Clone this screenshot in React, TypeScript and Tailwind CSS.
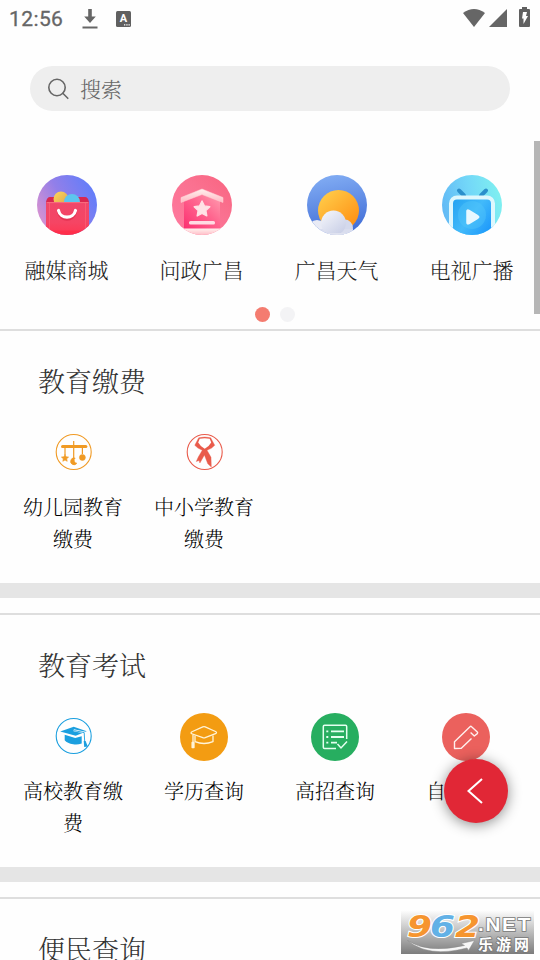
import React from 'react';

type Item = {
  label: string;
  icon: React.FC;
};

const ShopIcon: React.FC = () => (
  <svg viewBox="0 0 60 60" className="w-[60px] h-[60px]">
    <defs>
      <linearGradient id="shopBg" x1="0" y1="0.7" x2="1" y2="0.2">
        <stop offset="0" stopColor="#d992d0" />
        <stop offset="0.45" stopColor="#927fe9" />
        <stop offset="1" stopColor="#5d7dfb" />
      </linearGradient>
      <linearGradient id="shopBag" x1="0" y1="0" x2="0" y2="1">
        <stop offset="0" stopColor="#f0476a" />
        <stop offset="0.6" stopColor="#f54564" />
        <stop offset="1" stopColor="#ff3550" />
      </linearGradient>
      <linearGradient id="shopYellow" x1="0" y1="0" x2="1" y2="1">
        <stop offset="0" stopColor="#ffd95c" />
        <stop offset="1" stopColor="#d9a04a" />
      </linearGradient>
      <clipPath id="shopClip"><circle cx="30" cy="30" r="30" /></clipPath>
    </defs>
    <g clipPath="url(#shopClip)">
      <rect width="60" height="60" fill="url(#shopBg)" />
      <path d="M13 22h35q3 0 4 5v3H9v-3q1-5 4-5z" fill="#d92750" />
      <circle cx="24" cy="24" r="7.500" fill="url(#shopYellow)" />
      <circle cx="35" cy="27" r="8" fill="#5cc5ee" />
      <rect x="9" y="27" width="43" height="34" rx="2" fill="url(#shopBag)" />
      <path d="M10 55.500h41v5H10z" fill="#ff2440" opacity="0.500" />
      <path d="M9.500 27.600h42" stroke="#f8707f" strokeWidth="1" />
      <path d="M12.500 28v28M48.500 28v28" stroke="#ff6f80" strokeWidth="0.500" />
      <path d="M22 37.500c2 8.500 14 8.500 16 0" stroke="#d3203f" strokeWidth="3.500" fill="none" strokeLinecap="round" opacity="0.500" />
      <path d="M21.500 35.500c2 8.800 15 8.800 17 0" stroke="#fff" strokeWidth="3.200" fill="none" strokeLinecap="round" />
    </g>
  </svg>
);

const HouseIcon: React.FC = () => (
  <svg viewBox="0 0 60 60" className="w-[60px] h-[60px]">
    <defs>
      <linearGradient id="houseBg" x1="0" y1="1" x2="1" y2="0">
        <stop offset="0" stopColor="#ff7ba0" />
        <stop offset="0.6" stopColor="#fa7190" />
        <stop offset="1" stopColor="#f9637f" />
      </linearGradient>
      <linearGradient id="houseBody" x1="0" y1="1" x2="1" y2="0">
        <stop offset="0" stopColor="#fb2f70" />
        <stop offset="0.55" stopColor="#ff668f" />
        <stop offset="1" stopColor="#ffa0b2" />
      </linearGradient>
      <linearGradient id="houseLight" x1="0" y1="0" x2="0" y2="1">
        <stop offset="0" stopColor="#fff1ee" />
        <stop offset="1" stopColor="#ffb9c4" />
      </linearGradient>
      <clipPath id="houseClip"><circle cx="30" cy="30" r="30" /></clipPath>
    </defs>
    <g clipPath="url(#houseClip)">
      <rect width="60" height="60" fill="url(#houseBg)" />
      <path d="M12 25l18-7 18 7v29H12z" fill="url(#houseBody)" />
      <path d="M9 22.500L30 14l21 8.500v5L30 19.500 9 27.500z" fill="url(#houseLight)" stroke="#ffd3d6" strokeWidth="0.500" strokeLinejoin="round" />
      <path d="M30 26l2.400 4.900 5.400.8-3.900 3.800.9 5.400-4.800-2.500-4.800 2.500.9-5.400-3.900-3.800 5.400-.8z" fill="#ffe3e6" stroke="#ffe0e4" strokeWidth="1.400" strokeLinejoin="round" />
      <rect x="17" y="46" width="26" height="3.600" rx="1.500" fill="#ffdce3" />
      <rect x="8" y="53.500" width="44" height="7" fill="url(#houseLight)" />
    </g>
  </svg>
);

const WeatherIcon: React.FC = () => (
  <svg viewBox="0 0 60 60" className="w-[60px] h-[60px]">
    <defs>
      <linearGradient id="skyBg" x1="0" y1="0" x2="0.2" y2="1">
        <stop offset="0" stopColor="#85b0f5" />
        <stop offset="1" stopColor="#4470d8" />
      </linearGradient>
      <linearGradient id="sun" x1="0.1" y1="0" x2="0.9" y2="0.9">
        <stop offset="0" stopColor="#ffcf4c" />
        <stop offset="1" stopColor="#ff8f13" />
      </linearGradient>
      <linearGradient id="cloud" x1="0" y1="0" x2="0.8" y2="1">
        <stop offset="0" stopColor="#f7f8fc" />
        <stop offset="1" stopColor="#c8cee6" />
      </linearGradient>
      <clipPath id="skyClip"><circle cx="30" cy="30" r="30" /></clipPath>
    </defs>
    <g clipPath="url(#skyClip)">
      <rect width="60" height="60" fill="url(#skyBg)" />
      <circle cx="31.500" cy="35.500" r="20.500" fill="url(#sun)" />
      <circle cx="10" cy="54" r="9" fill="#e9ebf5" />
      <circle cx="37.500" cy="53" r="8.500" fill="#d4d9ec" />
      <path d="M10 54h36v8H10z" fill="#d9ddee" />
      <circle cx="26.500" cy="48" r="12.500" fill="url(#cloud)" />
      <path d="M4 58h42v4H4z" fill="#dfe2f0" />
    </g>
  </svg>
);

const TvIcon: React.FC = () => (
  <svg viewBox="0 0 60 60" className="w-[60px] h-[60px]">
    <defs>
      <linearGradient id="tvBg" x1="0" y1="0.6" x2="1" y2="0.4">
        <stop offset="0" stopColor="#62b9f5" />
        <stop offset="0.5" stopColor="#73d7f8" />
        <stop offset="1" stopColor="#7ff0f0" />
      </linearGradient>
      <linearGradient id="tvScreen" x1="0" y1="0" x2="1" y2="0.8">
        <stop offset="0" stopColor="#20a0f0" />
        <stop offset="0.5" stopColor="#42bafa" />
        <stop offset="1" stopColor="#1793fb" />
      </linearGradient>
      <clipPath id="tvClip"><circle cx="30" cy="30" r="30" /></clipPath>
    </defs>
    <g clipPath="url(#tvClip)">
      <rect width="60" height="60" fill="url(#tvBg)" />
      <path d="M17 15.500l5 5M44 15.500l-5 5" stroke="#2b8fcb" strokeWidth="4" strokeLinecap="round" />
      <rect x="9" y="22.500" width="42" height="45" rx="6" fill="url(#tvScreen)" stroke="#def7fd" strokeWidth="4" />
      <circle cx="30" cy="40" r="14" fill="#56c8fb" opacity="0.400" />
      <path d="M25 36v11.500q0 2 2 1l9-5.500q1.500-1 0-2l-9-5.500q-2-1-2 .5z" fill="#e9f8ff" stroke="#e9f8ff" strokeWidth="1.500" />
    </g>
  </svg>
);

const MobileIcon: React.FC = () => (
  <svg viewBox="-0.700 0 48 48" className="w-12 h-12" fill="none" stroke="#f09a24">
    <circle cx="24" cy="24" r="17.500" strokeWidth="1.100" />
    <path d="M12.800 18.500h23.400" strokeWidth="3" strokeLinecap="round" />
    <path d="M24 13v4M15.300 19v8M24 19v11M32.700 19v7" strokeWidth="1.200" />
    <path d="M15.300 26.500l1.100 2.300 2.500.3-1.900 1.700.5 2.500-2.200-1.200-2.200 1.200.5-2.500-1.900-1.700 2.500-.3z" fill="#f09a24" strokeWidth="0.600" />
    <path d="M25.500 30a3.500 3.500 0 1 0 1.800 5.200 3 3 0 0 1-1.800-5.200z" fill="#f09a24" strokeWidth="0.500" />
    <circle cx="32.700" cy="29.500" r="3" fill="#f09a24" strokeWidth="0.500" />
  </svg>
);

const ScarfIcon: React.FC = () => (
  <svg viewBox="-0.700 0 48 48" className="w-12 h-12" fill="none" stroke="#e95b4b">
    <circle cx="24" cy="24" r="17.500" strokeWidth="1.100" />
    <path d="M18 9.800q6-1.600 12 0l4 7.500q-2.500 3.200-7.700 5l4 7 .3 9.700-3.500-3.200L23.700 27l-4.500 8-.8-2.500-2.800 1 2-4.500 4-6.700q-5-2-7.500-5z" fill="#e95b4b" strokeWidth="0.400" />
    <path d="M19 10.800q5-1 10 0l1.500 3.700q-2 3.800-6.500 6.300-4.500-2.600-6.500-6.300z" fill="#fff" stroke="none" />
  </svg>
);

const CapIcon: React.FC = () => (
  <svg viewBox="-0.700 0 48 48" className="w-12 h-12">
    <circle cx="24" cy="24" r="17.500" fill="none" stroke="#1b9fdf" strokeWidth="1.100" />
    <path d="M10.500 19.500L24 14.800l13 4.500-11 4.400z" fill="#1b9fdf" />
    <path d="M15 22.800l10.500 3.200 6.500-1.800v7.300q-4 1.500-8.500.8-6-.8-8.500-4z" fill="#1b9fdf" />
    <path d="M24 18.300l11 2.200.800 9" fill="none" stroke="#fff" strokeWidth="1.900" />
    <path d="M24.500 18.600l10 2 .500 9" fill="none" stroke="#1b9fdf" strokeWidth="0.900" />
    <path d="M34 29h1.900l2.200 5.500-3.600.5z" fill="#1b9fdf" />
  </svg>
);

const DegreeIcon: React.FC = () => (
  <svg viewBox="0 0 48 48" className="w-12 h-12 translate-y-px" fill="none" stroke="#fff4d9" strokeWidth="1.300" strokeLinejoin="round">
    <circle cx="24" cy="24" r="24" fill="#f39c12" stroke="none" />
    <path d="M11 20q0-1 1.500-1.500l10.300-4.700q1.200-.5 2.400 0l10.300 4.700q2 1 0 2.200l-10.300 4q-1.200.4-2.400 0l-10.300-3.700Q11 20.500 11 20z" />
    <path d="M15 22.500v6.200q9 3.600 18 0v-6.200" />
    <path d="M13 21.500v8" />
    <path d="M12.100 29.500h1.900v5h-1.900z" fill="#fff4d9" />
  </svg>
);

const ListCheckIcon: React.FC = () => (
  <svg viewBox="0 0 48 48" className="w-12 h-12 translate-y-px" fill="none" stroke="#e4fff0" strokeWidth="1.500">
    <circle cx="24" cy="24" r="24" fill="#27ae60" stroke="none" />
    <path d="M35.700 26V13.500q0-1.200-1.200-1.200h-21q-1.200 0-1.200 1.200v20.800q0 1.200 1.200 1.200H25" />
    <path d="M20 18.300h13M20 24h13M20 29.700h6M15.300 18.300h2M15.300 24h2M15.300 29.700h2" strokeWidth="1.800" />
    <path d="M26.500 31l3.500 4 6-6.500" />
  </svg>
);

const PencilIcon: React.FC = () => (
  <svg viewBox="0 0 48 48" className="w-12 h-12 translate-y-px" fill="none" stroke="#fff0ee" strokeWidth="1.400" strokeLinejoin="round">
    <circle cx="24" cy="24" r="24" fill="#eb615d" stroke="none" />
    <path d="M29.500 25.500l-10.200 9.800-6.800.2v-6.800L28 13.700q.8-.8 1.600 0l5.700 5.300q.8.800 0 1.600l-3 2.400-3.700-3.500" />
  </svg>
);

const SHORTCUTS: Item[] = [
  { label: '融媒商城', icon: ShopIcon },
  { label: '问政广昌', icon: HouseIcon },
  { label: '广昌天气', icon: WeatherIcon },
  { label: '电视广播', icon: TvIcon }
];

const PAYMENTS: Item[] = [
  { label: '幼儿园教育缴费', icon: MobileIcon },
  { label: '中小学教育缴费', icon: ScarfIcon }
];

const EXAMS: Item[] = [
  { label: '高校教育缴费', icon: CapIcon },
  { label: '学历查询', icon: DegreeIcon },
  { label: '高招查询', icon: ListCheckIcon },
  { label: '自考查询', icon: PencilIcon }
];

const StatusBar: React.FC = () => (
  <header className="flex h-[37px] shrink-0 items-center pl-[9px] pr-[10px] text-[#666]">
    <span className="w-[73px] pt-px font-[Roboto] text-[21px] font-normal leading-none tracking-[0.4px] [-webkit-text-stroke:0.3px_#666]">12:56</span>
    <svg viewBox="0 0 16 22" className="h-[22px] w-4" fill="#666">
      <path d="M6.200 1h3.600v7.500h4L8 15 2.200 8.500h4zM.5 18.500h15v1.900H.5z" />
    </svg>
    <svg viewBox="0 0 15 16" className="ml-[18px] h-4 w-[15px]">
      <rect width="15" height="16" rx="1.500" fill="#606060" />
      <text x="3.800" y="11" fontFamily="Roboto" fontSize="11" fontWeight="700" fill="#fff">A</text>
      <path d="M8 13.800h1.300M10.300 13.800h1.300M12.500 13.800h1.300" stroke="#fff" strokeWidth="1.300" />
    </svg>
    <div className="ml-auto flex items-center">
      <svg viewBox="0 0 22 18" className="mb-[2px] h-[18px] w-[22px]" fill="#666">
        <path d="M0 4q11-8 22 0L11 18z" />
      </svg>
      <svg viewBox="0 0 18 18" className="mb-px ml-[4px] h-[18px] w-[18px]" fill="#666">
        <path d="M18 0v18H0z" />
      </svg>
      <svg viewBox="0 0 11 20" className="mb-[3px] ml-3 h-5 w-[11px]">
        <path d="M3 0h5v2h2q1 0 1 1v16q0 1-1 1H1q-1 0-1-1V3q0-1 1-1h2z" fill="#606060" />
        <path d="M4 5h4L7 9h2l-4.500 8V11.500H3z" fill="#fff" />
      </svg>
    </div>
  </header>
);

const Section: React.FC<{ title: string; items: Item[] }> = ({ title, items }) => (
  <section className="h-[284px] shrink-0 border-t-2 border-[#dedede]">
    <div className="flex h-[252px] flex-col">
      <h2 className="pl-[38px] pt-[30px] text-[27px] leading-[40px] text-[#333]">{title}</h2>
      <div className="flex pl-[7.5px] pt-[27px]">
        {items.map(({ label, icon: Icon }) => (
          <div key={label} className="flex w-[131px] flex-col items-center">
            <Icon />
            <span className="mt-[15px] w-[101px] text-center text-[20px] leading-8 text-black">{label}</span>
          </div>
        ))}
      </div>
    </div>
    <div className="h-[15px] bg-[#e5e5e5]" />
  </section>
);

const Watermark: React.FC = () => (
  <svg viewBox="0 0 133 44" className="absolute left-[401px] top-[910px] h-[44px] w-[133px]">
    <defs>
      <linearGradient id="markBg" x1="0" y1="0" x2="0" y2="1">
        <stop offset="0" stopColor="#fff" />
        <stop offset="0.5" stopColor="#bdbdbd" />
        <stop offset="1" stopColor="#7c7c7c" />
      </linearGradient>
    </defs>
    <rect width="133" height="44" fill="url(#markBg)" />
    <g fontFamily="DejaVu Sans" fontStyle="italic" fontWeight="700" fontSize="31" stroke="#fff" strokeWidth="2" paintOrder="stroke">
      <text x="6" y="27" textLength="25" lengthAdjust="spacingAndGlyphs" fill="#f6952f">9</text>
      <text x="29" y="27" textLength="25" lengthAdjust="spacingAndGlyphs" fill="#62b1e6">6</text>
      <text x="54" y="27" textLength="25" lengthAdjust="spacingAndGlyphs" fill="#f6952f">2</text>
    </g>
    <path d="M6.500 30.500q20 13.500 57 5l-3.500-2 13.500-3-6 10-1.500-2.500Q27 48 6.500 30.500z" fill="#f7f7f7" stroke="#8b8b8b" strokeWidth="0.500" />
    <g fill="#fff" stroke="#777" strokeWidth="1.500" paintOrder="stroke" fontWeight="700">
      <text x="77" y="21" fontFamily="Liberation Sans" fontSize="18" textLength="54" lengthAdjust="spacingAndGlyphs" letterSpacing="1.500">.NET</text>
      <text x="77" y="39.500" fontFamily="'Noto Sans CJK SC', sans-serif" fontSize="15" textLength="51">乐游网</text>
    </g>
  </svg>
);

export default function App() {
  return (
    <div className="relative flex h-[960px] w-[540px] flex-col overflow-hidden bg-[#fefefe] font-['Noto_Serif_CJK_SC','Noto_Sans_CJK_SC',serif] font-light">
      <StatusBar />

      <div className="mx-[30px] mt-[29px] flex h-[45px] shrink-0 items-center rounded-full bg-[#eee] pl-[18px] text-[#666]">
        <svg viewBox="0 0 22 22" className="h-[22px] w-[22px]" fill="none" stroke="#666" strokeWidth="1.600">
          <circle cx="9" cy="9.500" r="8.200" />
          <path d="M14.800 15.300l5 5" strokeLinecap="round" />
        </svg>
        <span className="ml-[10px] text-[21px] leading-none">搜索</span>
      </div>

      <nav className="flex h-[218px] shrink-0 flex-col pt-[64px]">
        <div className="-ml-px grid w-[540px] grid-cols-4">
          {SHORTCUTS.map(({ label, icon: Icon }) => (
            <div key={label} className="flex flex-col items-center">
              <Icon />
              <span className="mt-[19px] text-[21px] leading-[30px] text-[#222]">{label}</span>
            </div>
          ))}
        </div>
        <div className="mt-[23px] flex justify-center gap-[10px] pl-[10px]">
          <i className="h-[15px] w-[15px] rounded-full bg-[#f47c70]" />
          <i className="h-[15px] w-[15px] rounded-full bg-[#f3f3f5]" />
        </div>
      </nav>

      <Section title="教育缴费" items={PAYMENTS} />
      <Section title="教育考试" items={EXAMS} />
      <Section title="便民查询" items={[]} />

      <div className="absolute right-0 top-[141px] h-[173px] w-[6px] bg-[#b6b6b6]" />

      <button aria-label="返回" className="absolute left-[444px] top-[759px] flex h-[64px] w-[64px] items-center justify-center rounded-full bg-[#e12736] pr-[2px] shadow-[0_2px_14px_rgba(0,0,0,0.45)]">
        <svg viewBox="0 0 16 26" className="h-[26px] w-4" fill="none" stroke="#fff" strokeWidth="2">
          <path d="M15 1L1.500 13 15 25" />
        </svg>
      </button>

      <Watermark />
    </div>
  );
}
